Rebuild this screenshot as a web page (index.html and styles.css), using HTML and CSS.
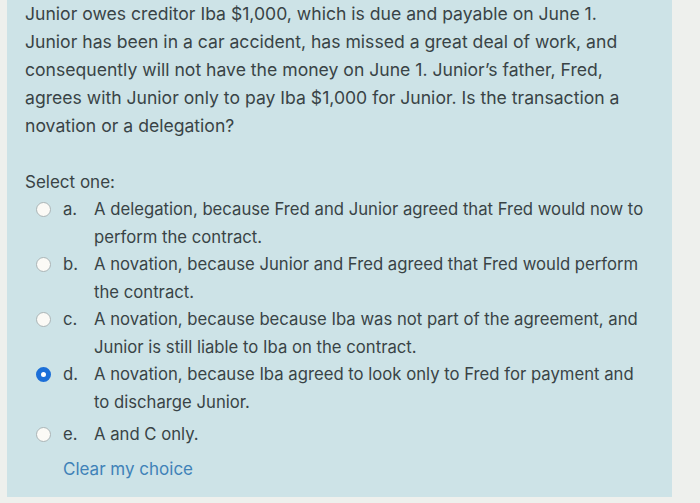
FILE: index.html
```html
<!DOCTYPE html>
<html lang="en">
<head>
    <meta charset="UTF-8">
    <title>Question</title>
    <link rel="stylesheet" href="styles.css">
</head>
<body>
    <div class="que">
        <div class="qtext">
            Junior owes creditor Iba $1,000, which is due and payable on June 1.<br>
            Junior has been in a car accident, has missed a great deal of work, and<br>
            consequently will not have the money on June 1. Junior&rsquo;s father, Fred,<br>
            agrees with Junior only to pay Iba $1,000 for Junior. Is the transaction a<br>
            novation or a delegation?
        </div>
        <div class="prompt">Select one:</div>
        <div class="answer">
            <div class="option">
                <span class="radio"></span>
                <span class="letter">a.</span>
                <span class="text">A delegation, because Fred and Junior agreed that Fred would now to<br>perform the contract.</span>
            </div>
            <div class="option">
                <span class="radio"></span>
                <span class="letter">b.</span>
                <span class="text">A novation, because Junior and Fred agreed that Fred would perform<br>the contract.</span>
            </div>
            <div class="option">
                <span class="radio"></span>
                <span class="letter">c.</span>
                <span class="text">A novation, because because Iba was not part of the agreement, and<br>Junior is still liable to Iba on the contract.</span>
            </div>
            <div class="option">
                <span class="radio checked"></span>
                <span class="letter">d.</span>
                <span class="text">A novation, because Iba agreed to look only to Fred for payment and<br>to discharge Junior.</span>
            </div>
            <div class="option last">
                <span class="radio"></span>
                <span class="letter">e.</span>
                <span class="text">A and C only.</span>
            </div>
        </div>
        <a class="clear" href="#">Clear my choice</a>
    </div>
</body>
</html>
```

FILE: styles.css
```css
body {
    margin: 0;
    background-color: #eef0ed;
    font-family: Inter, "Liberation Sans", Arial, sans-serif;
    color: #394346;
}
.que {
    margin-left: 7px;
    width: 665px;
    height: 497px;
    padding: 0 0 0 18px;
    background-color: #cde3e7;
    box-sizing: border-box;
    overflow: hidden;
}
.qtext {
    font-size: 17.6px;
    line-height: 28px;
    white-space: nowrap;
}
.prompt {
    font-size: 17px;
    line-height: 28px;
    margin-top: 28px;
}
.option {
    display: flex;
    align-items: flex-start;
    font-size: 16.7px;
    line-height: 27.5px;
    padding-left: 11px;
}
.option.last {
    margin-top: 5px;
}
.radio {
    flex: none;
    box-sizing: border-box;
    width: 15px;
    height: 15px;
    margin-top: 6px;
    border: 1px solid #aab4b6;
    border-radius: 50%;
    background-color: #fbfaf6;
}
.radio.checked {
    border: 5px solid #1c6fd8;
    background-color: #ffffff;
}
.letter {
    flex: none;
    width: 31px;
    margin-left: 12px;
}
.text {
    white-space: nowrap;
}
.clear {
    display: block;
    margin: 6px 0 0 38px;
    font-size: 17px;
    line-height: 28px;
    color: #3f82b8;
    text-decoration: none;
}
```
